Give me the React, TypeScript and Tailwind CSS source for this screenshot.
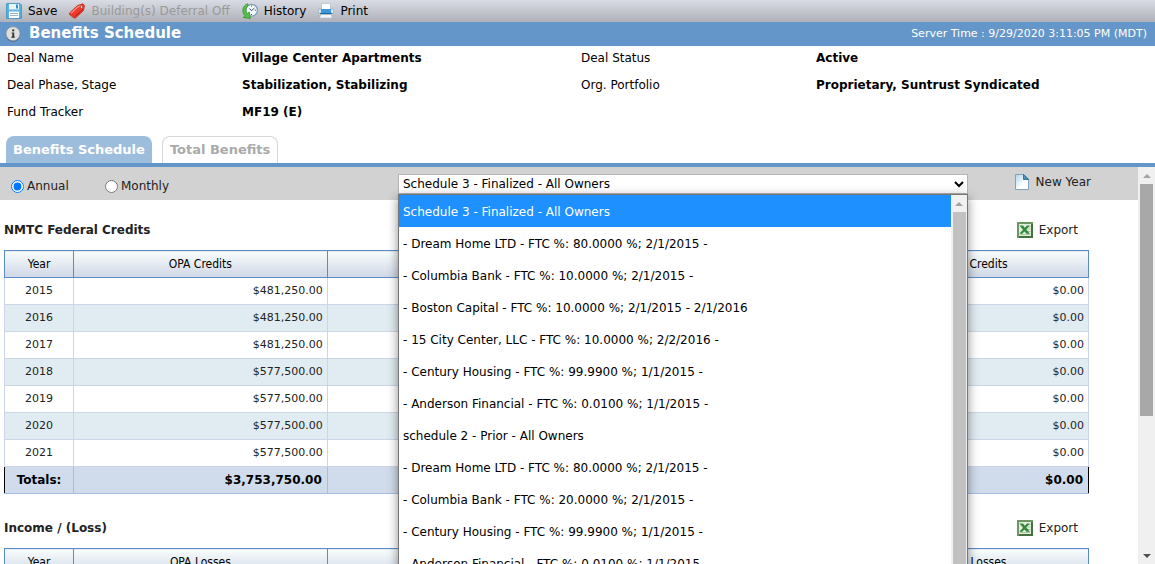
import { useState } from "react";
import type { ReactNode } from "react";

const scheduleOptions = [
  "Schedule 3 - Finalized - All Owners",
  "- Dream Home LTD - FTC %: 80.0000 %; 2/1/2015 -",
  "- Columbia Bank - FTC %: 10.0000 %; 2/1/2015 -",
  "- Boston Capital - FTC %: 10.0000 %; 2/1/2015 - 2/1/2016",
  "- 15 City Center, LLC - FTC %: 10.0000 %; 2/2/2016 -",
  "- Century Housing - FTC %: 99.9900 %; 1/1/2015 -",
  "- Anderson Financial - FTC %: 0.0100 %; 1/1/2015 -",
  "schedule 2 - Prior - All Owners",
  "- Dream Home LTD - FTC %: 80.0000 %; 2/1/2015 -",
  "- Columbia Bank - FTC %: 20.0000 %; 2/1/2015 -",
  "- Century Housing - FTC %: 99.9900 %; 1/1/2015 -",
  "- Anderson Financial - FTC %: 0.0100 %; 1/1/2015 -",
];

const credits = [
  ["2015", "$481,250.00"],
  ["2016", "$481,250.00"],
  ["2017", "$481,250.00"],
  ["2018", "$577,500.00"],
  ["2019", "$577,500.00"],
  ["2020", "$577,500.00"],
  ["2021", "$577,500.00"],
];

const deal = [
  ["Deal Name", "Village Center Apartments"],
  ["Deal Status", "Active"],
  ["Deal Phase, Stage", "Stabilization, Stabilizing"],
  ["Org. Portfolio", "Proprietary, Suntrust Syndicated"],
  ["Fund Tracker", "MF19 (E)"],
];

function SaveIcon() {
  return (
    <svg width="16" height="16" viewBox="0 0 16 16" aria-hidden="true">
      <path d="M.7.700h13.300l1.300 1.300v13.300H.7z" fill="#5db4e2" stroke="#3a93c8" />
      <path d="M3 1h10v5.500H3z" fill="#e9f5fc" />
      <path d="M10 1.500h2V5.500h-2z" fill="#3d8fc2" />
      <path d="M3 8.500h10V15H3z" fill="#fff" />
      <path d="M4 10.500h8M4 12.500h8" stroke="#9fb4c2" />
    </svg>
  );
}

function TagIcon() {
  return (
    <svg width="16" height="16" viewBox="0 0 16 16" aria-hidden="true">
      <path d="M.6 10 8.500 2.500 14 .8 15.500 2.500 14.500 7.500 6.500 15H5L.6 11.500z" fill="#ee3a2c" stroke="#c4281c" strokeWidth="0.8" />
      <path d="M2 10.300 9 3.700l3.500-1.200" fill="none" stroke="#ff8d7d" strokeWidth="1.2" />
      <path d="M5.500 14 14 6.500" stroke="#a91c12" strokeWidth="0.8" />
      <circle cx="12.600" cy="4" r="1.200" fill="#fff" stroke="#8f1c12" strokeWidth="0.6" />
    </svg>
  );
}

function HistoryIcon() {
  return (
    <svg width="16" height="16" viewBox="0 0 16 16" aria-hidden="true">
      <circle cx="9.500" cy="7.200" r="5.900" fill="#f7fafc" stroke="#7e9bb0" strokeWidth="1.200" />
      <path d="M7.500 5.500 9.500 7.700 12.500 5M9.500 2.600v1M9.500 11v1M13.900 7.200h-1" fill="none" stroke="#2f4a5c" strokeWidth="1" />
      <path d="M5.500.8C.8 2.700-.9 8.600 3 12.700L1.300 14.500l7 1L7.300 9 5.500 10.500C3.300 8.300 3.500 5 6.300 2.800z" fill="#55c244" stroke="#23872a" strokeWidth="0.700" />
    </svg>
  );
}

function PrintIcon() {
  return (
    <svg width="16" height="16" viewBox="0 0 16 16" aria-hidden="true">
      <path d="M3.500.500h9V7h-9z" fill="#fbfdff" stroke="#b3c3d0" strokeWidth="0.8" />
      <path d="M.5 6h3v3.500h9V6h3v6.500H.5z" fill="#dbe4ea" stroke="#9fb3c2" strokeWidth="0.7" />
      <path d="M3 6h10v4.500H3z" fill="#3d97dc" />
      <path d="M1.500 10.500h13" stroke="#1f6cab" strokeWidth="1.2" />
      <path d="M2.500 11.500h11l1 3.700h-13z" fill="#f5f8fa" stroke="#9fb0bd" strokeWidth="0.8" />
    </svg>
  );
}

function InfoIcon() {
  return (
    <svg width="16" height="16" viewBox="0 0 16 16" aria-hidden="true">
      <circle cx="8" cy="8.600" r="7.200" fill="#4a6076" />
      <circle cx="8" cy="7.700" r="7" fill="#dedede" stroke="#8d9399" strokeWidth="0.600" />
      <path d="M6.500 6.500h2.700v5H6.500v-.8h.8V7.300h-.8z" fill="#333" />
      <path d="M6.500 11.200h3.500" stroke="#333" strokeWidth="0.900" />
      <circle cx="8.200" cy="4.400" r="1.100" fill="#333" />
    </svg>
  );
}

function PageIcon() {
  return (
    <svg width="14" height="16" viewBox="0 0 14 16" aria-hidden="true">
      <defs>
        <linearGradient id="page" x1="0" y1="0" x2="1" y2="1">
          <stop offset="0" stopColor="#a9d3ea" />
          <stop offset="0.6" stopColor="#ffffff" />
        </linearGradient>
      </defs>
      <path d="M.5.5H9L13.5 5v10.500H.5z" fill="url(#page)" stroke="#7fa3bb" />
      <path d="M8.500.5V5.500h5z" fill="#4f8fb8" stroke="#2f6a92" strokeWidth="0.900" />
    </svg>
  );
}

function SheetIcon() {
  return (
    <svg width="16" height="16" viewBox="0 0 16 16" aria-hidden="true">
      <path d="M1 1h14v14H1z" fill="#e3eedf" stroke="#6d9663" strokeWidth="2" />
      <path d="M2 15h13V2" fill="none" stroke="#44703f" strokeWidth="2" />
      <path d="M10 4.500h3.500M10.500 7h3M10.500 9.500h3M3 12.500h10" stroke="#a9c6a2" />
      <path d="M2.500 3.500H6l1.800 2.300L10 3.500h2.800L9.300 7.600l3.700 4.200H9.500L7.500 9.500 5.200 11.800H2.300L6 7.700z" fill="#338a3a" />
    </svg>
  );
}

function Arrow({ down, className }: { down?: boolean; className: string }) {
  return (
    <svg width="8" height="4" viewBox="0 0 8 4" className={className} aria-hidden="true">
      <path d={down ? "M0 0h8L4 4z" : "M0 4h8L4 0z"} fill="currentColor" />
    </svg>
  );
}

function ToolButton({ icon, children, disabled }: { icon: ReactNode; children: ReactNode; disabled?: boolean }) {
  return (
    <button type="button" disabled={disabled} className="flex items-center gap-[6px] text-black disabled:text-[#999]">
      {icon}
      {children}
    </button>
  );
}

function SectionHeader({ title }: { title: string }) {
  return (
    <div className="flex h-5 items-center justify-between">
      <h2 className="font-bold text-[#222]">{title}</h2>
      <button type="button" className="mr-[11px] flex items-center gap-[6px] text-[#222]">
        <SheetIcon />
        Export
      </button>
    </div>
  );
}

function TableHead({ unit }: { unit: string }) {
  const cell =
    "h-[27px] border border-[#5b8cc9] bg-linear-to-b from-[#f8fcfc] via-[#e3eaf1] to-[#d0d7e6] text-xs font-normal text-black font-['DejaVu_Sans_Condensed','DejaVu_Sans',sans-serif]";
  return (
    <>
      <colgroup>
        <col className="w-[69px]" />
        <col />
        <col />
        <col />
        <col />
      </colgroup>
      <thead>
        <tr>
          <th className={cell}>Year</th>
          <th className={cell}>OPA {unit}</th>
          <th className={cell}></th>
          <th className={cell}></th>
          <th className={cell}>Allocated {unit}</th>
        </tr>
      </thead>
    </>
  );
}

function CreditsTable() {
  const cell = "h-[27px] border border-[#cdd6e6] px-1 text-right text-[11px]";
  const total = "h-[27px] border border-[#a9bce4] px-[5px] text-right text-xs font-bold text-black";
  return (
    <table className="w-full table-fixed border-collapse text-[#222]">
      <TableHead unit="Credits" />
      <tbody>
        {credits.map(([year, amount]) => (
          <tr key={year} className="even:bg-[#e1ecf2]">
            <td className="h-[27px] border border-[#cdd6e6] text-center text-[11px]">{year}</td>
            <td className={cell}>{amount}</td>
            <td className={cell}></td>
            <td className={cell}></td>
            <td className={cell}>$0.00</td>
          </tr>
        ))}
      </tbody>
      <tfoot>
        <tr className="border-x border-black bg-[#d0dceb]">
          <th className="h-[27px] border-y border-r border-[#a9bce4] text-center text-xs font-bold text-black">Totals:</th>
          <td className={total}>$3,753,750.00</td>
          <td className={total}></td>
          <td className={total}></td>
          <td className="h-[27px] border-y border-l border-[#a9bce4] px-[5px] text-right text-xs font-bold text-black">$0.00</td>
        </tr>
      </tfoot>
    </table>
  );
}

function ScheduleSelect() {
  const [value, setValue] = useState("0");
  return (
    <div className="relative h-5">
      <select
        aria-label="Schedule"
        value={value}
        onChange={(e) => setValue(e.target.value)}
        className="h-5 w-full appearance-none border border-[#b5b5b5] bg-white pl-1 text-black outline-none"
      >
        {scheduleOptions.map((o, i) => (
          <option key={i} value={String(i)}>{o}</option>
        ))}
      </select>
      <svg width="10" height="7" viewBox="0 0 10 7" className="pointer-events-none absolute top-[7px] right-1" aria-hidden="true">
        <path d="M1 1l4 4 4-4" fill="none" stroke="#000" strokeWidth="2" />
      </svg>
      <div className="absolute top-full left-0 z-10 flex w-full border border-[#767676] bg-white shadow-[0_3px_10px_rgba(0,0,0,0.45)]">
        <ul role="listbox" className="min-w-0 flex-1">
          {scheduleOptions.map((o, i) => (
            <li
              key={i}
              role="option"
              aria-selected={String(i) === value}
              onClick={() => setValue(String(i))}
              className="flex h-8 items-center pt-px pl-1 whitespace-nowrap text-black aria-selected:bg-[#1e90ff] aria-selected:text-white"
            >
              {o}
            </li>
          ))}
        </ul>
        <div className="flex w-4 flex-col items-center bg-[#f1f1f1]">
          <div className="flex h-[17px] items-center">
            <Arrow className="text-[#a3a3a3]" />
          </div>
          <div className="w-[13px] flex-1 bg-[#c1c1c1]" />
        </div>
      </div>
    </div>
  );
}

export default function App() {
  const [period, setPeriod] = useState("annual");

  return (
    <div className="flex h-screen flex-col overflow-hidden bg-white font-['DejaVu_Sans',Verdana,sans-serif] text-xs text-[#222]">
      <div className="flex h-[22px] shrink-0 items-center gap-3 bg-linear-to-b from-[#d9dce4] to-[#aeb1b8] pl-[6px]">
        <ToolButton icon={<SaveIcon />}>Save</ToolButton>
        <ToolButton icon={<TagIcon />} disabled>Building(s) Deferral Off</ToolButton>
        <ToolButton icon={<HistoryIcon />}>History</ToolButton>
        <ToolButton icon={<PrintIcon />}>Print</ToolButton>
      </div>

      <header className="flex h-6 shrink-0 items-center bg-[#6496c9] pr-2 pl-[5px] text-white">
        <InfoIcon />
        <h1 className="ml-2 text-[15px] font-bold">Benefits Schedule</h1>
        <p className="ml-auto text-[11px]">Server Time : 9/29/2020 3:11:05 PM (MDT)</p>
      </header>

      <dl className="grid shrink-0 grid-cols-[235fr_339fr] pl-[7px] leading-[27px] text-black md:grid-cols-[235fr_339fr_235fr_339fr]">
        {deal.map(([label, text]) => (
          <div key={label} className="contents">
            <dt className="-mt-px mb-px">{label}</dt>
            <dd className="-mt-px mb-px font-bold">{text}</dd>
          </div>
        ))}
      </dl>

      <nav className="mt-[9px] flex shrink-0 gap-[10px] border-b-4 border-[#6496c9] pl-[6px] text-[13px] font-bold">
        <button type="button" className="h-[27px] rounded-t-lg bg-[#9dbddd] px-[7px] text-white">Benefits Schedule</button>
        <button type="button" className="h-[27px] rounded-t-lg border border-b-0 border-[#d6d6d6] px-[7px] text-[#aaa]">Total Benefits</button>
      </nav>

      <div className="flex min-h-0 flex-1">
        <main className="min-w-0 flex-1 overflow-hidden">
          <div className="grid h-[33px] grid-cols-[398fr_570fr_170fr] bg-[#d2d2d2] pt-[7px]">
            <div className="flex h-6 items-center pl-[11px]">
              <label className="flex w-[94px] items-center gap-[3px]">
                <input type="radio" name="period" className="m-0 size-[13px]" checked={period === "annual"} onChange={() => setPeriod("annual")} />
                Annual
              </label>
              <label className="flex items-center gap-[3px]">
                <input type="radio" name="period" className="m-0 size-[13px]" checked={period === "monthly"} onChange={() => setPeriod("monthly")} />
                Monthly
              </label>
            </div>
            <ScheduleSelect />
            <button type="button" className="flex h-4 items-center gap-[7px] justify-self-end pr-[47px]">
              <PageIcon />
              New Year
            </button>
          </div>

          <section className="pt-5 pr-[49px] pl-1">
            <SectionHeader title="NMTC Federal Credits" />
            <div className="mt-[10px]">
              <CreditsTable />
            </div>
          </section>

          <section className="pt-6 pr-[49px] pl-1">
            <SectionHeader title="Income / (Loss)" />
            <div className="mt-[10px]">
              <table className="w-full table-fixed border-collapse">
                <TableHead unit="Losses" />
              </table>
            </div>
          </section>
        </main>

        <div className="flex w-[17px] shrink-0 flex-col items-center bg-[#f0f0f0]">
          <div className="flex h-[17px] items-center">
            <Arrow className="text-[#a3a3a3]" />
          </div>
          <div className="w-[13px] flex-1">
            <div className="h-[64%] bg-[#a8a8a8]" />
          </div>
          <div className="flex h-[17px] items-center">
            <Arrow down className="text-[#505050]" />
          </div>
        </div>
      </div>
    </div>
  );
}
